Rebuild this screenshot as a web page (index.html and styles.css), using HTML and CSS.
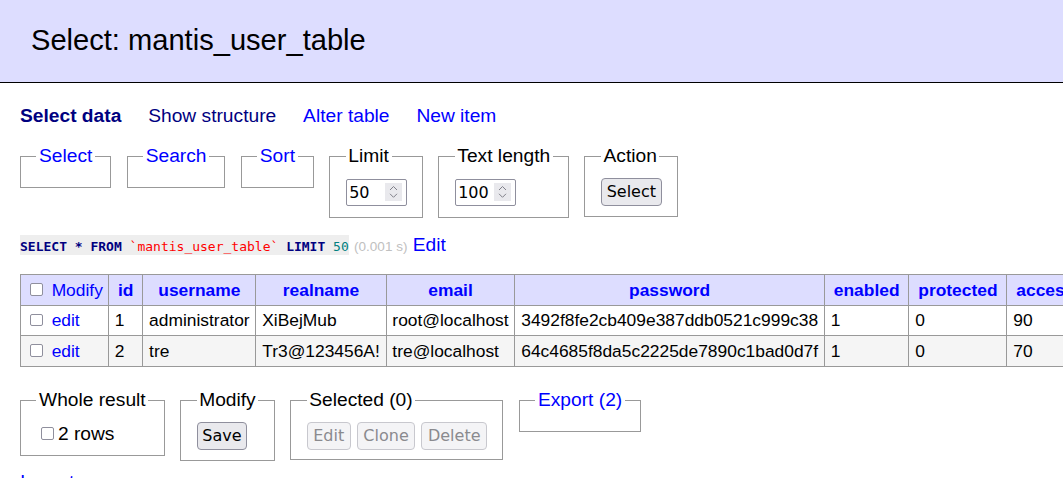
FILE: index.html
```html
<!DOCTYPE html>
<html lang="en">
<head>
<meta charset="utf-8">
<title>Select: mantis_user_table</title>
<link rel="stylesheet" href="styles.css">
</head>
<body>
<h2 class="page-title">Select: mantis_user_table</h2>
<div class="content">
  <p class="links">
    <a href="#" class="visited active">Select data</a>
    <a href="#" class="visited">Show structure</a>
    <a href="#">Alter table</a>
    <a href="#">New item</a>
  </p>
  <form class="select-form">
    <fieldset class="box"><legend><a href="#">Select</a></legend></fieldset>
    <fieldset class="box"><legend><a href="#">Search</a></legend></fieldset>
    <fieldset class="box"><legend><a href="#">Sort</a></legend></fieldset>
    <fieldset class="box">
      <legend>Limit</legend>
      <span class="num-wrap">
        <input class="num" type="text" value="50">
        <span class="spin"><svg width="17" height="18" viewBox="0 0 17 18"><path d="M5 7 L8.5 3.5 L12 7" fill="none" stroke="#808089" stroke-width="1"/><path d="M5 10.8 L8.5 14.3 L12 10.8" fill="none" stroke="#808089" stroke-width="1"/></svg></span>
      </span>
    </fieldset>
    <fieldset class="box">
      <legend>Text length</legend>
      <span class="num-wrap">
        <input class="num" type="text" value="100">
        <span class="spin"><svg width="17" height="18" viewBox="0 0 17 18"><path d="M5 7 L8.5 3.5 L12 7" fill="none" stroke="#808089" stroke-width="1"/><path d="M5 10.8 L8.5 14.3 L12 10.8" fill="none" stroke="#808089" stroke-width="1"/></svg></span>
      </span>
    </fieldset>
    <fieldset class="box">
      <legend>Action</legend>
      <button type="button" class="btn btn-block">Select</button>
    </fieldset>
  </form>
  <p class="sql"><code class="code"><span class="kw">SELECT</span> <span class="kw">*</span> <span class="kw">FROM</span> <span class="bac">`mantis_user_table`</span> <span class="kw">LIMIT</span> <span class="num-lit">50</span></code> <span class="time">(0.001 s)</span> <a href="#">Edit</a></p>
  <table class="data">
    <thead>
      <tr>
        <td class="head-mod"><input type="checkbox" class="cb"> <a href="#">Modify</a></td>
        <th><a href="#">id</a></th>
        <th><a href="#">username</a></th>
        <th><a href="#">realname</a></th>
        <th><a href="#">email</a></th>
        <th><a href="#">password</a></th>
        <th><a href="#">enabled</a></th>
        <th><a href="#">protected</a></th>
        <th><a href="#">access_level</a></th>
        <th><a href="#">login_count</a></th>
        <th><a href="#">lost_password_request_count</a></th>
        <th><a href="#">failed_login_count</a></th>
      </tr>
    </thead>
    <tbody>
      <tr>
        <td><input type="checkbox" class="cb"> <a href="#">edit</a></td>
        <td>1</td>
        <td>administrator</td>
        <td>XiBejMub</td>
        <td>root@localhost</td>
        <td>3492f8fe2cb409e387ddb0521c999c38</td>
        <td>1</td>
        <td>0</td>
        <td>90</td>
        <td>12</td>
        <td>0</td>
        <td>0</td>
      </tr>
      <tr class="odd">
        <td><input type="checkbox" class="cb"> <a href="#">edit</a></td>
        <td>2</td>
        <td>tre</td>
        <td>Tr3@123456A!</td>
        <td>tre@localhost</td>
        <td>64c4685f8da5c2225de7890c1bad0d7f</td>
        <td>1</td>
        <td>0</td>
        <td>70</td>
        <td>3</td>
        <td>0</td>
        <td>0</td>
      </tr>
    </tbody>
  </table>
  <div class="footer">
    <fieldset class="box">
      <legend>Whole result</legend>
      <label class="all-rows"><input type="checkbox" class="cb cb-label">2 rows</label>
    </fieldset>
    <fieldset class="box">
      <legend>Modify</legend>
      <button type="button" class="btn btn-block">Save</button>
    </fieldset>
    <fieldset class="box">
      <legend>Selected (0)</legend>
      <div class="btn-row">
        <button type="button" class="btn" disabled>Edit</button>
        <button type="button" class="btn" disabled>Clone</button>
        <button type="button" class="btn" disabled>Delete</button>
      </div>
    </fieldset>
    <fieldset class="box"><legend><a href="#">Export (2)</a></legend></fieldset>
  </div>
  <p class="import"><a href="#">Import</a></p>
</div>
</body>
</html>
```
FILE: styles.css
```css
html {
  overflow: hidden;
}
body {
  margin: 0;
  overflow: hidden;
  color: #000;
  background: #fff;
  font-family: "Liberation Sans", Arial, sans-serif;
  font-size: 19.2px;
  line-height: 24px;
}
a {
  color: #0000ff;
  text-decoration: none;
}
a.visited {
  color: #000080;
}
a.active {
  font-weight: bold;
}
.page-title {
  margin: 0;
  padding: 21.5px 31px 24.5px;
  font-size: 29.1px;
  line-height: 36px;
  font-weight: normal;
  background: #ddf;
  border-bottom: 1px solid #000;
}
.content {
  padding-left: 20px;
}
.links {
  display: flex;
  gap: 26.9px;
  margin: 21px 0 0;
  white-space: nowrap;
}
.select-form {
  display: flex;
  align-items: flex-start;
  gap: 15.3px;
  margin: 16px 0 0;
}
.box {
  margin: 0;
  padding: 9.6px 15.36px;
  border: 1px solid #999;
  flex: none;
}
.box legend {
  padding: 0 2.67px;
}
.num-wrap {
  display: block;
  position: relative;
  width: 61px;
  height: 27px;
  margin: 1.4px 0 1px;
}
.num {
  box-sizing: border-box;
  width: 61px;
  height: 27px;
  margin: 0;
  padding: 0 20px 0 2.5px;
  border: 1px solid #8f8f9d;
  border-radius: 2px;
  background: #fff;
  color: #000;
  font-family: "DejaVu Sans", sans-serif;
  font-size: 16px;
  outline: none;
}
.spin {
  position: absolute;
  right: 5px;
  top: 4.3px;
  width: 17px;
  height: 18px;
  background: #e9e9ed;
}
.spin svg {
  display: block;
}
.btn {
  box-sizing: border-box;
  height: 28px;
  margin: 0;
  padding: 0 4.8px;
  border: 1px solid #8f8f9d;
  border-radius: 4px;
  background: #e9e9ed;
  color: #000;
  font-family: "DejaVu Sans", sans-serif;
  font-size: 16px;
  line-height: 26px;
}
.btn:disabled {
  padding: 0 5.6px;
  background: #f4f4f6;
  border-color: #c8c8ce;
  color: #8a8a8e;
}
.btn-block {
  display: block;
  margin-top: 0.4px;
}
.btn-row {
  display: flex;
  gap: 6px;
  margin-top: 0.1px;
}
.sql {
  margin: 15.4px 0 0;
  white-space: nowrap;
}
.code {
  font-family: "DejaVu Sans Mono", monospace;
  font-size: 13px;
  background: #eee;
  padding: 4px 0 1px;
}
.kw {
  color: #000080;
  font-weight: bold;
}
.bac {
  color: #ff0000;
}
.num-lit {
  color: #008080;
}
.time {
  color: #c0c0c0;
  font-size: 13.5px;
}
.data {
  margin: 15.5px 0 0;
  border-collapse: collapse;
  font-size: 17.4px;
  line-height: 22.5px;
  white-space: nowrap;
}
.data td,
.data th {
  border: 1px solid #999;
  padding: 3.46px 5.8px;
  text-align: left;
}
.data thead th {
  text-align: center;
  padding: 3.46px 8.9px;
}
.data thead td {
  padding-left: 5.2px;
  padding-right: 5.2px;
}
.data tbody tr td:first-child {
  padding-left: 5.2px;
}
.data thead td,
.data thead th {
  background: #ddf;
}
.data tr.odd {
  background: #f5f5f5;
}
.cb {
  -webkit-appearance: none;
  appearance: none;
  box-sizing: border-box;
  display: inline-block;
  width: 12.6px;
  height: 12.6px;
  margin: 0 4px 0 4px;
  border: 1.5px solid #8f8f9d;
  border-radius: 2px;
  background: #fff;
  vertical-align: baseline;
}
.cb-label {
  margin: 0 4px 0 5px;
}
.footer {
  display: flex;
  align-items: flex-start;
  gap: 15.5px;
  margin-top: 21.5px;
}
.import {
  margin: 9.5px 0 0;
}
```
